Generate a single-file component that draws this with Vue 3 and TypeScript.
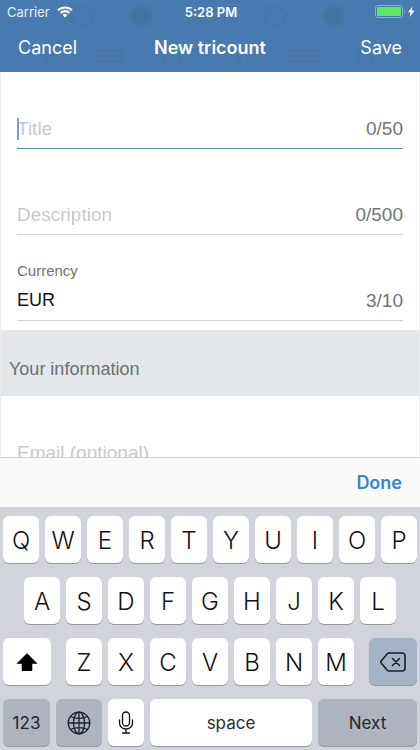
<script setup lang="ts">
import { onMounted, ref } from 'vue'

interface Field {
  id: string
  placeholder: string
  max: number
  label?: string
}

const fields: Field[] = [
  { id: 'title', placeholder: 'Title', max: 50 },
  { id: 'description', placeholder: 'Description', max: 500 },
  { id: 'currency', placeholder: 'Currency', max: 10, label: 'Currency' },
]

const values = ref<Record<string, string>>({ title: '', description: '', currency: 'EUR' })
const email = ref('')
const active = ref('title')

const topRow = [...'QWERTYUIOP']
const homeRow = [...'ASDFGHJKL']
const lowerRow = [...'ZXCVBNM']

function type(text: string) {
  const field = fields.find((f) => f.id === active.value)
  if (field && values.value[field.id].length < field.max) values.value[field.id] += text
}

function erase() {
  values.value[active.value] = values.value[active.value].slice(0, -1)
}

function next() {
  const index = fields.findIndex((f) => f.id === active.value)
  active.value = fields[(index + 1) % fields.length].id
  document.getElementById(active.value)?.focus()
}

onMounted(() => document.getElementById('title')?.focus())
</script>

<template>
  <div class="screen">
    <header class="header">
      <svg class="pattern" width="420" height="72" aria-hidden="true">
        <g v-for="x in [0, 193]" :key="x" :transform="`translate(${x} 0)`">
          <circle cx="82" cy="16" r="10" fill="none" stroke="#45719c" stroke-width="3" stroke-dasharray="9 3" />
          <circle cx="141" cy="16" r="11" fill="#456f98" />
          <path d="M95 50h31M95 56h31M95 62h31" stroke="#456f98" stroke-width="3" />
          <path d="M163 50h7v4h-4v10h-3zM174 50h7v14h-3v-10h-4z" fill="#45719c" />
          <path d="M46 56v10M41 61h8" stroke="#45719c" stroke-width="2" />
        </g>
      </svg>
      <div class="status">
        <span class="carrier">
          Carrier
          <svg width="16" height="12" viewBox="0 0 16 12" aria-hidden="true">
            <g fill="none" stroke="#fff" stroke-width="2.1">
              <path d="M1 4.3a10 10 0 0 1 14 0" />
              <path d="M3.6 7a6.2 6.2 0 0 1 8.8 0" />
            </g>
            <path d="M5.6 9a3.4 3.4 0 0 1 4.8 0L8 11.6z" fill="#fff" />
          </svg>
        </span>
        <span class="time">5:28 PM</span>
        <svg class="battery" width="40" height="13" viewBox="0 0 40 13" aria-hidden="true">
          <rect x=".5" y=".5" width="27" height="12" rx="2.5" fill="none" stroke="#8db1ca" />
          <rect x="2" y="2" width="24" height="9" rx="1" fill="#5fe85f" />
          <path d="M29 4.5q2 2 0 4z" fill="#8db1ca" />
          <path d="M37.500 1.500 33 7.200h2.600L34.800 12 39.500 5.600h-2.800z" fill="#fff" />
        </svg>
      </div>
      <nav class="nav">
        <button type="button">Cancel</button>
        <h1>New tricount</h1>
        <button type="button">Save</button>
      </nav>
    </header>

    <main class="form">
      <div
        v-for="field in fields"
        :key="field.id"
        class="field"
        :class="{ active: active === field.id }"
      >
        <label :for="field.id" :class="{ hidden: !field.label }">{{ field.label ?? field.placeholder }}</label>
        <div class="line">
          <input
            :id="field.id"
            v-model="values[field.id]"
            :placeholder="field.placeholder"
            :maxlength="field.max"
            autocomplete="off"
            @focus="active = field.id"
          />
          <i v-if="active === field.id && !values[field.id]" class="caret"></i>
          <span class="count">{{ values[field.id].length }}/{{ field.max }}</span>
        </div>
      </div>
      <h2>Your information</h2>
      <div class="email">
        <input v-model="email" type="email" aria-label="Email (optional)" placeholder="Email (optional)" />
      </div>
    </main>

    <section class="dock">
      <div class="accessory"><button type="button">Done</button></div>
      <div class="keyboard">
        <div class="row">
          <button v-for="k in topRow" :key="k" type="button" class="key letter" @click="type(k)">{{ k }}</button>
        </div>
        <div class="row home">
          <button v-for="k in homeRow" :key="k" type="button" class="key letter" @click="type(k)">{{ k }}</button>
        </div>
        <div class="row lower">
          <button type="button" class="key" aria-label="Shift">
            <svg width="22" height="18" viewBox="0 0 22 18" aria-hidden="true">
              <path d="M11 .5 21 10.500h-5V17q0 1-1 1H7q-1 0-1-1V10.500H1z" fill="#000" stroke="#000" stroke-width=".6" stroke-linejoin="round" />
            </svg>
          </button>
          <div class="letters">
            <button v-for="k in lowerRow" :key="k" type="button" class="key letter" @click="type(k)">{{ k }}</button>
          </div>
          <button type="button" class="key erase" aria-label="Delete" @click="erase">
            <svg width="26" height="20" viewBox="0 0 26 20" fill="none" stroke="#17202a" stroke-width="1.6" stroke-linejoin="round" stroke-linecap="round" aria-hidden="true">
              <path d="M9 1h13a3 3 0 0 1 3 3v12a3 3 0 0 1-3 3H9q-1 0-1.700-.8L1.200 11q-.8-1 0-2L7.300 1.800Q8 1 9 1z" />
              <path d="m12.500 6.500 7 7m0-7-7 7" />
            </svg>
          </button>
        </div>
        <div class="row bottom">
          <button type="button" class="key dark">123</button>
          <button type="button" class="key dark" aria-label="Switch keyboard">
            <svg width="24" height="24" viewBox="0 0 24 24" fill="none" stroke="#1c222b" stroke-width="1.300" aria-hidden="true">
              <circle cx="12" cy="12" r="10.800" />
              <ellipse cx="12" cy="12" rx="5.500" ry="10.800" />
              <path d="M12 1v22M1 12h22M3.200 5.500q8.800 3.600 17.600 0M3.200 18.500q8.800-3.600 17.600 0" />
            </svg>
          </button>
          <button type="button" class="key" aria-label="Dictate">
            <svg width="16" height="23" viewBox="0 0 16 23" fill="none" stroke="#111" stroke-width="1.300" stroke-linecap="round" aria-hidden="true">
              <rect x="4.500" y="1" width="7" height="14" rx="3.500" />
              <path d="M1.500 9v3a6.500 6 0 0 0 13 0V9M8 18v4M4.500 22h7" />
            </svg>
          </button>
          <button type="button" class="key word" @click="type(' ')">space</button>
          <button type="button" class="key dark" @click="next">Next</button>
        </div>
      </div>
    </section>
  </div>
</template>

<style>
body {
  margin: 0;
}
</style>

<style scoped>
* {
  box-sizing: border-box;
}

.screen {
  display: flex;
  flex-direction: column;
  height: 100vh;
  overflow: hidden;
  background: #fff;
  font-family: Inter, 'Liberation Sans', sans-serif;
}

button {
  border: 0;
  padding: 0;
  background: none;
  color: inherit;
  font: inherit;
  cursor: pointer;
}

.header {
  position: relative;
  flex: none;
  overflow: hidden;
  background: #477bb0;
  color: #fff;
}

.pattern {
  position: absolute;
  top: 0;
  left: 0;
  opacity: 0.6;
  filter: blur(1px);
}

.status {
  position: relative;
  display: grid;
  grid-template-columns: 1fr auto 1fr;
  align-items: center;
  height: 23px;
  padding: 0 5px 0 7px;
  font-size: 13px;
}

.carrier {
  display: flex;
  align-items: center;
  gap: 7px;
  color: #e6eff7;
}

.time {
  font-weight: 600;
}

.battery {
  justify-self: end;
}

.nav {
  position: relative;
  display: grid;
  grid-template-columns: 1fr auto 1fr;
  align-items: center;
  height: 49px;
  padding: 0 18px 1px;
  font-size: 18px;
}

.nav button:first-child {
  justify-self: start;
}

.nav button:last-child {
  justify-self: end;
}

h1 {
  margin: 0;
  font-size: 18px;
  font-weight: 600;
}

.form {
  flex: 1;
  min-height: 0;
  overflow: hidden;
  border: solid #ededed;
  border-width: 0 1px;
  font-family: 'Liberation Sans', Arial, sans-serif;
}

.field {
  display: flex;
  flex-direction: column;
  justify-content: flex-end;
  height: 86px;
  margin: 0 16px;
  border-bottom: 1px solid #d2d2d2;
}

.field:first-child {
  height: 77px;
}

.field.active {
  border-color: #5f8cb8;
}

label {
  color: #737373;
  font-size: 15px;
  line-height: 18px;
}

label.hidden {
  visibility: hidden;
}

.line {
  position: relative;
  display: flex;
  align-items: center;
  height: 40px;
  padding-top: 1px;
}

input {
  flex: 1;
  min-width: 0;
  width: 100%;
  height: 24px;
  padding: 0;
  border: 0;
  outline: 0;
  background: none;
  color: #111;
  font: inherit;
  font-size: 18px;
  caret-color: transparent;
}

input:placeholder-shown {
  font-size: 19px;
}

input::placeholder {
  color: #c9c9cb;
  opacity: 1;
}

.caret {
  position: absolute;
  left: 0;
  width: 2px;
  height: 22px;
  background: #7fa3c6;
}

.count {
  color: #747474;
  font-size: 19px;
}

h2 {
  margin: 9px 0 0;
  padding: 11px 8px 0;
  height: 66px;
  background: #e3e7ea;
  color: #6e7071;
  font-size: 18px;
  font-weight: 400;
  line-height: 56px;
}

.email {
  margin: 0 16px;
  padding-top: 45px;
}

.dock {
  flex: none;
}

.accessory {
  display: flex;
  align-items: center;
  justify-content: flex-end;
  height: 50px;
  padding: 0 18px;
  border-top: 1px solid #cfd0d2;
  background: #fafafa;
  color: #3880d8;
  font-size: 18px;
  font-weight: 600;
}

.keyboard {
  display: grid;
  gap: 14px;
  padding: 9px 3px 4px;
  background: #d1d5db;
}

.row,
.letters {
  display: grid;
  grid-auto-flow: column;
  grid-auto-columns: minmax(0, 1fr);
  gap: 6px;
}

.home {
  padding: 0 21px;
}

.lower {
  grid-template-columns: 48fr 288fr 48fr;
  gap: 15px;
}

.bottom {
  grid-template-columns: 47fr 46fr 36fr 162fr 99fr;
}

.key {
  display: flex;
  align-items: center;
  justify-content: center;
  height: 47px;
  border-radius: 6px;
  background: #fff;
  box-shadow: 0 1px 0 #96999e;
  color: #111;
  font-size: 17px;
}

.letter {
  padding-top: 2px;
  font-size: 24px;
  font-weight: 300;
}

.dark {
  background: #adb4be;
  color: #23272e;
}

.erase {
  background: #a3b3c8;
}

.word {
  color: #2b2b2b;
}
</style>
